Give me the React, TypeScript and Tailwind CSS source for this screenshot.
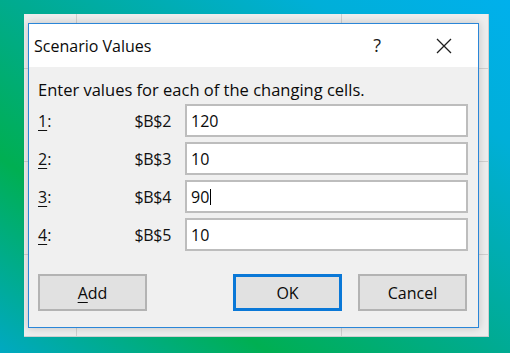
import React from "react";

const font = { fontFamily: '"Open Sans", "Noto Sans", sans-serif' };

function Row({ n, cell, value, caret }: { n: string; cell: string; value: string; caret?: boolean }) {
  return (
    <div className="flex items-center h-[33px]">
      <div className="w-[40px] text-[16px] text-[#111]">
        <span className="underline underline-offset-[3px] decoration-1">{n}</span>:
      </div>
      <div className="w-[93px] text-right text-[16px] text-[#111] tracking-[-0.3px]">{cell}</div>
      <div className="ml-[14px] w-[283px] h-[33px] bg-white border-2 border-[#bdbdbd] flex items-center pl-[4px] text-[16px] text-[#0a0a0a]">
        {value}
        {caret && <span className="inline-block w-px h-[16px] bg-black ml-px" />}
      </div>
    </div>
  );
}

function Btn({ children, primary }: { children: React.ReactNode; primary?: boolean }) {
  return (
    <div
      className={
        "w-[109px] h-[37px] flex items-center justify-center bg-[#e1e1e1] text-[16px] text-[#0a0a0a] " +
        (primary ? "border-[3px] border-[#0a78d7]" : "border-2 border-[#b3b3b3]")
      }
    >
      {children}
    </div>
  );
}

export default function App() {
  return (
    <div
      className="w-[510px] h-[353px] pl-[24px] pt-[14px] overflow-hidden"
      style={{
        ...font,
        background:
          "linear-gradient(36deg, #00a9c2 0%, #00af52 27%, #00ab90 50%, #00afd8 80%, #00b0ec 100%)",
      }}
    >
      <div className="relative w-[465px] h-[323px] bg-[#ededed]">
        <div className="grid grid-cols-[53px_265px_1fr] grid-rows-[55px_93px_93px_1fr] h-full">
          {Array.from({ length: 12 }).map((_, i) => (
            <div key={i} className="border-r border-b border-[#cfcfcf]" />
          ))}
        </div>
        <div className="absolute left-[4px] top-[9px] w-[451px] h-[305px] border border-[#2a86d8] bg-[#f0f0f0] shadow-[0_0_8px_rgba(0,0,0,0.18)] flex flex-col">
          <div className="h-[43px] bg-white flex items-center pl-[5px] pr-[26px]">
            <div className="text-[16px] text-[#0a0a0a] flex-1">Scenario Values</div>
            <div className="text-[18px] text-[#1a1a1a] mr-[55px]">?</div>
            <svg width="16" height="16" viewBox="0 0 16 16">
              <path d="M1 1 L15 15 M15 1 L1 15" stroke="#1e1e1e" strokeWidth="1.3" />
            </svg>
          </div>
          <div className="flex flex-col px-[9px] pt-[12px]">
            <div className="text-[16.5px] text-[#0a0a0a] leading-[22px]">Enter values for each of the changing cells.</div>
            <div className="flex flex-col gap-[5px] mt-[3px]">
              <Row n="1" cell="$B$2" value="120" />
              <Row n="2" cell="$B$3" value="10" />
              <Row n="3" cell="$B$4" value="90" caret />
              <Row n="4" cell="$B$5" value="10" />
            </div>
            <div className="flex mt-[23px]">
              <Btn>
                <span className="underline underline-offset-[3px] decoration-1">A</span>dd
              </Btn>
              <div className="ml-[86px]">
                <Btn primary>OK</Btn>
              </div>
              <div className="ml-[16px]">
                <Btn>Cancel</Btn>
              </div>
            </div>
          </div>
        </div>
      </div>
    </div>
  );
}
